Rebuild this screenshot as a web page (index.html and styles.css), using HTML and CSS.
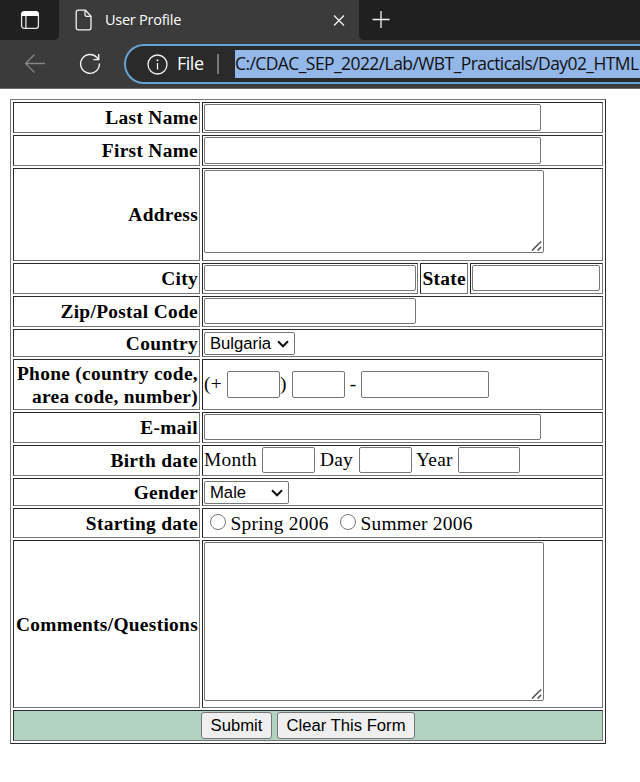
FILE: index.html
```html
<!DOCTYPE html>
<html lang="en">
<head>
<meta charset="utf-8">
<title>User Profile</title>
<link rel="stylesheet" href="styles.css">
</head>
<body>
<header class="browser">
  <div class="tabstrip">
    <div class="tab-actions">
      <svg width="20" height="20" viewBox="0 0 20 20" fill="none"><rect x="1.6" y="1.6" width="16.8" height="16.8" rx="2.6" stroke="#e4e4e4" stroke-width="1.3"/><path d="M1.5 6V4a2.7 2.7 0 0 1 2.7-2.700h11.600A2.700 2.700 0 0 1 18.500 4v2z" fill="#fff"/><path d="M5.900 6v12" stroke="#e4e4e4" stroke-width="1.3"/></svg>
    </div>
    <div class="tab">
      <svg class="page-icon" width="18" height="22" viewBox="0 0 18 22" fill="none" stroke="#f2f2f2" stroke-width="1.3" stroke-linejoin="round"><path d="M3.200 1.200H10.500L16 7.200V18.800a2 2 0 0 1-2 2H3.200a2 2 0 0 1-2-2V3.200a2 2 0 0 1 2-2z"/><path d="M10 1.200V5.800a1.500 1.500 0 0 0 1.500 1.500H16"/></svg>
      <span class="tab-title">User Profile</span>
      <svg class="close" width="12" height="12" viewBox="0 0 12 12" stroke="#f2f2f2" stroke-width="1.3"><path d="M1 1.500l10 10M11 1.500L1 11.500"/></svg>
    </div>
    <div class="new-tab"><svg width="18" height="18" viewBox="0 0 18 18" stroke="#f2f2f2" stroke-width="1.3"><path d="M0.500 8.500h17M9 0v17"/></svg></div>
  </div>
  <div class="toolbar">
    <svg class="back" width="22" height="20" viewBox="0 0 22 20" fill="none" stroke="#858585" stroke-width="1.3"><path d="M21 9.500H1.500M10.500 0.500L1.500 9.500l9 9"/></svg>
    <svg class="reload" width="22" height="22" viewBox="0 0 22 22" fill="none" stroke="#f2f2f2" stroke-width="1.4"><path d="M20.400 10.500a9.400 9.400 0 1 1-2.500-6L19.700 6.500"/><path d="M19.700 1v5.600h-5.400"/></svg>
    <div class="address">
      <svg width="21" height="21" viewBox="0 0 21 21" fill="none" stroke="#f2f2f2" stroke-width="1.3"><circle cx="10.500" cy="10.500" r="9.500"/><path d="M10.500 9v6.500"/><circle cx="10.500" cy="6.300" r="1" fill="#f2f2f2" stroke="none"/></svg>
      <span class="scheme">File</span>
      <span class="divider"></span>
      <span class="url">C:/CDAC_SEP_2022/Lab/WBT_Practicals/Day02_HTML</span>
    </div>
  </div>
</header>
<main>
<form>
<table class="profile">
  <colgroup><col class="c1"><col class="c2"><col class="c3"><col class="c4"></colgroup>
  <tr class="r31"><th>Last Name</th><td colspan="3"><div class="line"><input class="w-long" type="text"></div></td></tr>
  <tr class="r31"><th>First Name</th><td colspan="3"><div class="line"><input class="w-long" type="text"></div></td></tr>
  <tr class="r93"><th>Address</th><td colspan="3"><div class="area"><textarea class="short"></textarea><svg class="grip" width="12" height="12" viewBox="0 0 12 12" stroke="#555" stroke-width="1.7"><path d="M1 10.500L10 1.500M6.500 10.500L10 7"/></svg></div></td></tr>
  <tr class="r31"><th>City</th><td><div class="line"><input class="w-mid low" type="text"></div></td><th>State</th><td><div class="line"><input class="w-small low" type="text"></div></td></tr>
  <tr class="r31"><th>Zip/Postal Code</th><td colspan="3"><div class="line"><input class="w-mid low" type="text"></div></td></tr>
  <tr class="r28"><th>Country</th><td colspan="3"><div class="pick country"><select><option>Bulgaria</option></select><svg class="chevron" width="12" height="8" viewBox="0 0 12 8" fill="none" stroke="#111" stroke-width="2"><path d="M1 1.300L6 6.300 11 1.300"/></svg></div></td></tr>
  <tr class="r51"><th>Phone (country code,<br>area code, number)</th><td colspan="3"><div class="line phone"><span class="plus-sign">(+</span><input class="w-tiny" type="text"><span class="paren">)</span><input class="w-tiny" type="text"><span class="dash">-</span><input class="w-small" type="text"></div></td></tr>
  <tr class="r31"><th>E-mail</th><td colspan="3"><div class="line"><input class="w-long low" type="text"></div></td></tr>
  <tr class="r31"><th>Birth date</th><td colspan="3"><div class="line birth"><span class="month">Month</span><input class="w-tiny low" type="text"><span class="day">Day</span><input class="w-tiny low" type="text"><span class="year">Year</span><input class="w-year low" type="text"></div></td></tr>
  <tr class="r28"><th>Gender</th><td colspan="3"><div class="pick gender"><select><option>Male</option></select><svg class="chevron" width="12" height="8" viewBox="0 0 12 8" fill="none" stroke="#111" stroke-width="2"><path d="M1 1.300L6 6.300 11 1.300"/></svg></div></td></tr>
  <tr class="r30"><th>Starting date</th><td colspan="3"><div class="line start"><input type="radio" name="start"><span class="spring">Spring 2006</span><input type="radio" name="start"><span>Summer 2006</span></div></td></tr>
  <tr class="r168"><th>Comments/Questions</th><td colspan="3"><div class="area"><textarea class="tall"></textarea><svg class="grip" width="12" height="12" viewBox="0 0 12 12" stroke="#555" stroke-width="1.7"><path d="M1 10.500L10 1.500M6.500 10.500L10 7"/></svg></div></td></tr>
  <tr class="r31 actions"><td colspan="4"><div class="buttons"><button class="submit" type="button">Submit</button><button class="clear" type="button">Clear This Form</button></div></td></tr>
</table>
</form>
</main>
</body>
</html>
```
FILE: styles.css
```css
* { box-sizing: border-box; }
body { margin: 0; background: #fff; font: 20px/23px "Liberation Serif", serif; color: #000; }
svg { display: block; flex: none; }

.browser { height: 89px; background: #3b3b3b; border-bottom: 1px solid #6b6b6b; font-family: "Open Sans", sans-serif; color: #fff; overflow: hidden; }
.tabstrip { display: flex; height: 40px; background: #3b3b3b; }
.tab-actions { width: 59px; padding: 10px 0 0 20px; background: #202020; border-bottom-right-radius: 5px; }
.tab { display: flex; align-items: center; width: 300px; padding: 0 14px 0 16px; background: #3b3b3b; }
.tab-title { margin-left: 12px; padding-bottom: 1px; font-size: 14.5px; letter-spacing: -0.25px; white-space: nowrap; }
.close { margin-left: auto; }
.new-tab { flex: 1; padding: 11px 0 0 13px; background: #202020; border-bottom-left-radius: 5px; }
.toolbar { display: flex; align-items: center; height: 48px; padding-left: 24px; }
.reload { margin-left: 33px; }
.address { display: flex; align-items: center; flex: 1; min-width: 0; height: 40px; margin-left: 23px; padding-left: 21px; border: 2px solid #66a5d5; border-right: 0; border-radius: 20px 0 0 20px; background: #2a2a2b; overflow: hidden; }
.scheme { margin-left: 9px; width: 27px; padding-bottom: 1px; font-size: 18px; letter-spacing: -0.5px; }
.divider { flex: none; width: 2px; height: 20px; margin: 0 16px 0 13px; background: #777; }
.url { flex: 1; min-width: 0; height: 28px; line-height: 26px; background: #94b7ea; color: #111; font-size: 17.5px; letter-spacing: -0.58px; white-space: nowrap; }

main { padding: 10px; }
.profile { width: 596px; table-layout: fixed; border-collapse: separate; border-spacing: 2px; border: 1px solid; border-color: #777 #292929 #292929 #777; }
.c1 { width: 187px; }
.c2 { width: 216px; }
.c3 { width: 48px; }
.c4 { width: 133px; }
th, td { padding: 1px; border: 1px solid; border-color: #292929 #777 #777 #292929; vertical-align: middle; }
th { text-align: right; white-space: nowrap; font-weight: bold; font-size: 19.4px; letter-spacing: 0.3px; }
td { vertical-align: top; font-size: 19.4px; letter-spacing: 0.25px; }
.r28 { height: 28px; }
.r30 { height: 30px; }
.r31 { height: 31px; }
.r51 { height: 51px; }
.r93 { height: 93px; }
.r168 { height: 168px; }
.line { display: flex; align-items: center; white-space: nowrap; }
.phone { padding-top: 10px; }
.phone span, .birth span { padding-bottom: 2px; }
.start { padding-top: 2px; }

input, select, textarea, button { margin: 0; font: 16.667px "Liberation Sans", sans-serif; }
input[type="text"], textarea { height: 27px; border: 1px solid #767676; border-radius: 2px; background: #fff; }
input.low { height: 26px; }
.w-long { width: 337px; }
.w-mid { width: 212px; }
.w-small { width: 128px; }
.w-tiny { width: 53px; }
.w-year { width: 62px; }
.area { position: relative; width: 340px; }
textarea { display: block; width: 100%; resize: none; }
textarea.short { height: 83px; }
textarea.tall { height: 159px; }
.grip { position: absolute; right: 1px; bottom: 1px; }
.pick { position: relative; padding-top: 1px; }
select { display: block; appearance: none; width: 100%; height: 23px; padding: 0 0 0 5px; border: 1px solid #767676; border-radius: 2px; background: #fff; color: #000; }
.chevron { position: absolute; right: 6px; top: 9px; }
.country { width: 91px; }
.gender { width: 85px; }
.plus-sign { width: 23px; }
.paren { width: 12px; }
.dash { width: 16px; text-align: center; }
.month { width: 58px; }
.day { width: 44px; padding-left: 5px; }
.year { width: 46px; padding-left: 4px; }
.spring { width: 109px; }
input[type="radio"] { width: 16px; height: 16px; margin: 0 5px 4px 5.5px; }
input[type="radio"] ~ input[type="radio"] { margin-left: 0; }
.actions td { background: #b2d3c2; }
.buttons { display: flex; justify-content: center; gap: 5px; }
button { height: 27px; padding: 0; border: 1px solid #767676; border-radius: 3px; background: #efefef; color: #000; }
.submit { width: 71px; }
.clear { width: 138px; }
```
